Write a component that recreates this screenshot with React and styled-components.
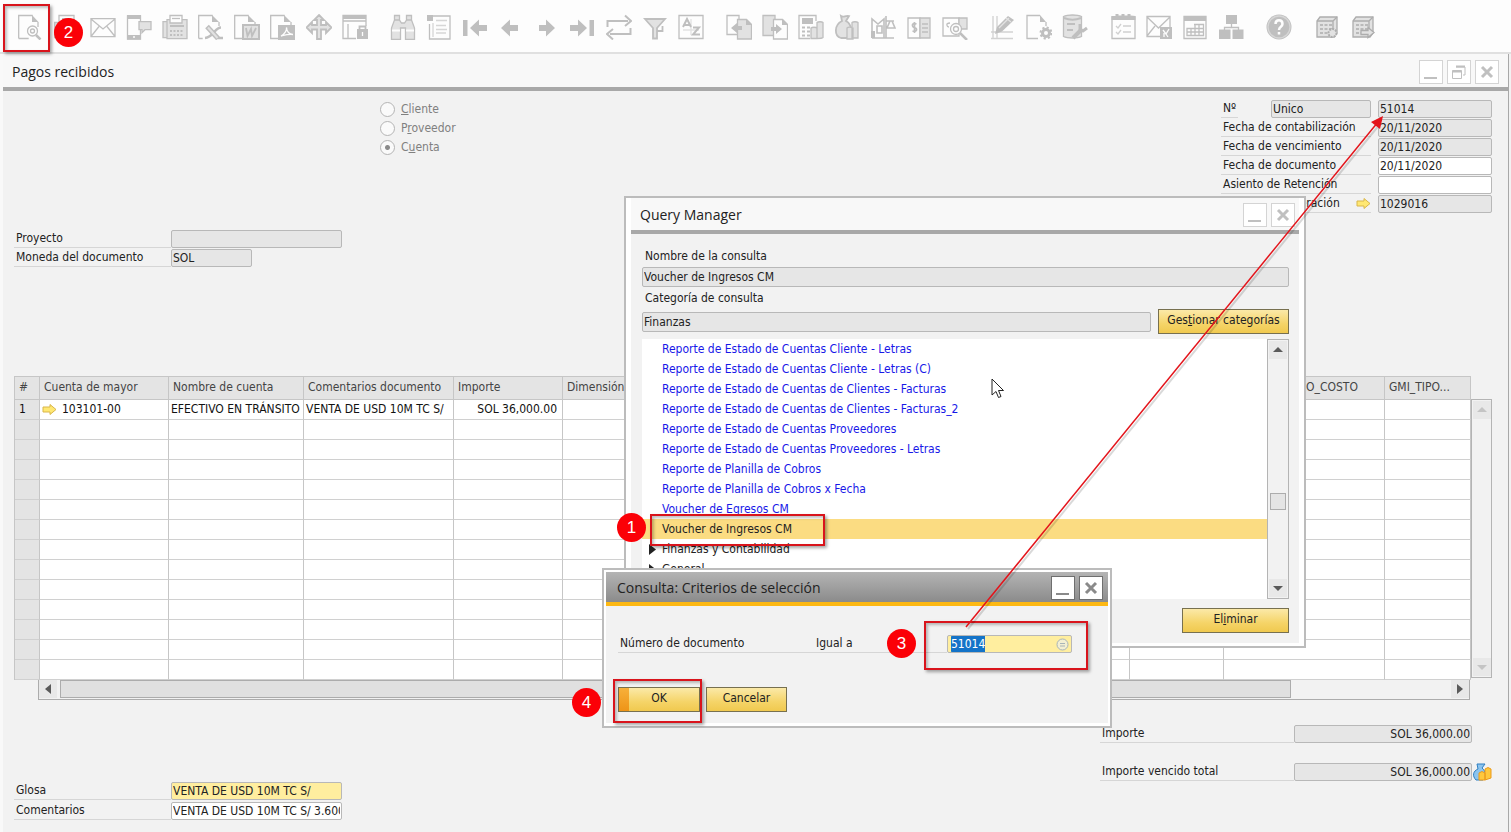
import React, { useEffect, useRef } from 'react'
import styled, { createGlobalStyle, css } from 'styled-components'

const uiFont = '"DejaVu Sans Condensed", "DejaVu Sans", Tahoma, sans-serif'
const titleFont = '"Open Sans", "Noto Sans", sans-serif'

const GlobalStyle = createGlobalStyle`
  *, *::before, *::after {
    box-sizing: border-box;
  }
  body {
    margin: 0;
    background: #f2f2f2;
    color: #222;
    font: 12px/17px ${uiFont};
  }
  button, input {
    font: inherit;
    color: inherit;
  }
`

const Desktop = styled.div`
  position: relative;
  display: flex;
  flex-direction: column;
  min-height: 100vh;
  overflow: hidden;
`

/* Toolbar */

const Toolbar = styled.nav`
  display: flex;
  gap: 22px;
  height: 54px;
  padding: 14px 18px 0;
  background: #fdfdfd;
  border-bottom: 2px solid #e0e0e0;
`

const ToolGroup = styled.div`
  display: flex;
  gap: 10px;
`

const ToolButton = styled.button`
  width: 26px;
  height: 26px;
  padding: 0;
  border: none;
  background: none;
`

const Glyph = styled.svg`
  display: block;
  width: 26px;
  height: 26px;
  fill: none;
  stroke: ${({ $dark }) => ($dark ? '#adadad' : '#bfbfbf')};
  stroke-width: 1.3;

  .f {
    fill: #bfbfbf;
    stroke: none;
  }
  .l {
    fill: #e2e2e2;
  }
  .w {
    fill: #fdfdfd;
  }
`

/* Windows */

const MainWindow = styled.main`
  flex-grow: 1;
  display: flex;
  flex-direction: column;
  margin-right: 2px;
  border-right: 1px solid #a8a8a8;
  border-left: 3px solid #f9f9f9;
  background: #f2f2f2;
`

const TitleBar = styled.header`
  display: flex;
  align-items: center;
  gap: 4px;
  height: ${({ $tall }) => ($tall ? 37 : 36)}px;
  padding: 2px ${({ $tall }) => ($tall ? 9 : 4)}px 0 9px;
  background: #f8f8f8;
  border-bottom: 4px solid #a8a8a8;

  ${({ $active }) =>
    $active &&
    css`
      height: 34px;
      padding: 1px 5px 0 11px;
      background: linear-gradient(#b4b4b4, #8b8b8b);
      border-bottom-color: #fdb813;
    `}
`

const Title = styled.h1`
  flex-grow: 1;
  margin: 0;
  font: 14px/20px ${titleFont};
  color: #222;
`

const WindowButton = styled.button`
  display: grid;
  place-items: center;
  width: 24px;
  height: 24px;
  padding: 0;
  background: #fff;
  border: 1px solid ${({ $active }) => ($active ? '#6f6f6f' : '#d4d4d4')};
  color: ${({ $active }) => ($active ? '#8a8a8a' : '#c0c0c0')};
`

const FloatingWindow = styled.section`
  position: absolute;
  left: ${({ $x }) => $x}px;
  top: ${({ $y }) => $y}px;
  width: ${({ $width }) => $width}px;
  padding: ${({ $padding }) => $padding};
  background: #fff;
  border: 2px solid #bcbcbc;
`

/* Fields */

const Label = styled.label`
  color: #222;
  white-space: nowrap;
`

const UnderlinedLabel = styled(Label)`
  height: 18px;
  padding: 0 2px;
  border-bottom: 1px solid #d6d6d6;
`

const Field = styled.input`
  min-width: 0;
  width: ${({ $width }) => ($width ? `${$width}px` : '100%')};
  height: ${({ $tall }) => ($tall ? 20 : 18)}px;
  padding: 0 1px;
  background: ${({ $tone }) => $tone || '#e6e6e6'};
  border: 1px solid #b8b8b8;
  border-radius: 2px;
  outline: none;
  text-align: ${({ $right }) => ($right ? 'right' : 'left')};

  &::selection {
    background: #1473c8;
    color: #fff;
  }
`

const GoldButton = styled.button`
  width: ${({ $width }) => $width}px;
  height: 25px;
  padding: 0 0 2px;
  background: linear-gradient(#fbe9a8, #f5d468 60%, #f0c94f);
  border: 1px solid #77704f;
  white-space: nowrap;

  ${({ $default }) =>
    $default &&
    css`
      background: linear-gradient(#f7b03a, #ee9417) left / 10px 100% no-repeat,
        linear-gradient(#fbe9a8, #f5d468 60%, #f0c94f);
    `}
`

/* Main form */

const Form = styled.div`
  flex-grow: 1;
  padding: 9px 16px 11px 11px;
`

const HeadGrid = styled.div`
  display: grid;
  grid-template-columns: 366px 1fr 271px;
  row-gap: 17px;
  margin-bottom: 109px;
`

const RadioList = styled.fieldset`
  grid-column: 2;
  margin: 0;
  padding: 0;
  border: none;
`

const RadioLabel = styled.label`
  display: flex;
  align-items: center;
  gap: 6px;
  height: 19px;
  color: #808080;
`

const Radio = styled.input`
  appearance: none;
  width: 15px;
  height: 15px;
  margin: 0;
  border: 1px solid #b4b4b4;
  border-radius: 50%;
  background: #fafafa;

  &:checked {
    background: radial-gradient(#8a8a8a 0 2px, #fafafa 3px);
  }
`

const NumberRows = styled.div`
  display: grid;
  grid-template-columns: 150px 114px;
  gap: 1px 7px;
`

const NumberRow = styled.div`
  display: flex;
  justify-content: space-between;
`

const LinkRow = styled(NumberRow)`
  padding-left: 2px;
  border-bottom: 1px solid #d6d6d6;
  align-items: center;
`

const LeftRows = styled.div`
  display: grid;
  grid-template-columns: 157px 171px;
  row-gap: ${({ $gap }) => $gap}px;
  grid-column: 1;
`

/* Matrix */

const GridArea = styled.div`
  display: grid;
  grid-template-columns: minmax(0, 1fr) 21px;
`

const Matrix = styled.table`
  width: 100%;
  table-layout: fixed;
  border-collapse: separate;
  border-spacing: 0;
  border-left: 1px solid #c6c6c6;
  border-top: 1px solid #c6c6c6;
`

const HeaderCell = styled.th`
  height: 23px;
  padding: 0 4px 2px;
  background: #e4e4e4;
  border-right: 1px solid #c6c6c6;
  border-bottom: 1px solid #c6c6c6;
  color: #444;
  font-weight: normal;
  text-align: left;
  white-space: nowrap;
  overflow: hidden;
`

const Cell = styled.td`
  height: 20px;
  padding: 0 ${({ $right }) => ($right ? 5 : 0)}px 0 ${({ $index }) => ($index ? 4 : 2)}px;
  background: ${({ $index }) => ($index ? '#e4e4e4' : '#fff')};
  border-right: 1px solid #c6c6c6;
  border-bottom: 1px solid #d0d0d0;
  color: #111;
  text-align: ${({ $right }) => ($right ? 'right' : 'left')};
  white-space: nowrap;
  overflow: hidden;
`

const LinkedValue = styled.span`
  display: flex;
  align-items: center;
  gap: 5px;
`

const VerticalScroll = styled.div`
  display: flex;
  flex-direction: column;
  justify-content: space-between;
  padding: 1px;
  background: #f2f2f2;
  border: 1px solid #b4b4b4;
`

const MatrixScroll = styled(VerticalScroll)`
  margin: 23px 0 2px;
`

const HorizontalScroll = styled.div`
  display: flex;
  justify-content: space-between;
  height: 20px;
  margin: 0 1px 0 24px;
  border: 1px solid #acacac;
  border-top: none;
`

const HorizontalThumb = styled.div`
  flex-grow: 1;
  margin: 0 160px 1px 3px;
  background: #e0e0e0;
  border: 1px solid #acacac;
`

const ScrollButton = styled.button`
  display: grid;
  place-items: center;
  width: 18px;
  height: 18px;
  padding: 0;
  border: none;
  background: #e8e8e8;
  color: ${({ disabled }) => (disabled ? '#c4c4c4' : '#5a5a5a')};
`

/* Footer */

const Footer = styled.footer`
  display: flex;
  justify-content: space-between;
  align-items: flex-end;
  margin-top: 25px;
`

const Totals = styled.div`
  display: grid;
  grid-template-columns: 194px 178px 20px;
  row-gap: 20px;
  align-self: flex-start;
  padding-bottom: 39px;
`

/* Query manager */

const QueryBody = styled.div`
  display: flex;
  flex-direction: column;
  padding: 11px 10px 10px 11px;
  background: #f2f2f2;
`

const QueryLabel = styled(Label)`
  padding-left: 3px;
  line-height: 22px;
`

const CategoryRow = styled.div`
  display: flex;
  align-items: center;
  gap: 7px;
`

const ListFrame = styled.div`
  display: grid;
  grid-template-columns: 1fr 22px;
  height: 260px;
  margin: 5px 0 9px;
  background: #fff;
`

const QueryList = styled.ul`
  margin: 0;
  padding: 0;
  list-style: none;
  overflow: hidden;
`

const QueryItem = styled.button`
  display: grid;
  grid-template-columns: 13px auto;
  justify-content: start;
  align-items: center;
  width: 100%;
  height: 20px;
  padding: 0 0 0 7px;
  border: none;
  background: ${({ $selected }) => ($selected ? '#fbdc82' : 'none')};
  color: ${({ $query }) => ($query ? '#1818e8' : '#222')};
  text-align: left;
`

const QueryThumb = styled.div`
  height: 17px;
  margin: 134px 1px auto;
  background: #e4e4e4;
  border: 1px solid #acacac;
`

const QueryActions = styled.div`
  display: flex;
  justify-content: flex-end;
`

/* Selection criteria */

const CriteriaBody = styled.div`
  padding: 29px 34px 11px 12px;
  background: #f2f2f2;
`

const CriteriaRow = styled.div`
  display: grid;
  grid-template-columns: 196px 133px 125px;
  margin-bottom: 34px;
`

const ValueBox = styled.div`
  display: flex;
  align-items: center;
  padding: 0 2px;
  background: #ffee9f;
  border: 1px solid #b8b8b8;
  border-radius: 2px;
`

const ValueField = styled(Field)`
  flex: 1;
  height: 16px;
  border: none;
`

const CriteriaActions = styled.div`
  display: flex;
  gap: 6px;
`

/* Markers drawn over the windows */

const MarkerBox = styled.div`
  position: absolute;
  left: ${({ $x }) => $x}px;
  top: ${({ $y }) => $y}px;
  width: ${({ $width }) => $width}px;
  height: ${({ $height }) => $height}px;
  border: 2px solid #d9141c;
  box-shadow: 2px 2px 3px rgba(0, 0, 0, 0.35), inset 2px 2px 3px rgba(0, 0, 0, 0.25);
  pointer-events: none;
`

const MarkerNumber = styled.span`
  position: absolute;
  left: ${({ $x }) => $x}px;
  top: ${({ $y }) => $y}px;
  width: 29px;
  height: 29px;
  border-radius: 50%;
  background: #fb0007;
  color: #fff;
  font: 17px/29px "Liberation Sans", Arial, sans-serif;
  text-align: center;
`

const Overlay = styled.svg`
  position: absolute;
  left: ${({ $x }) => $x}px;
  top: ${({ $y }) => $y}px;
  pointer-events: none;
`

const tools = [
  [
    ['Vista preliminar', <><path d="M.7 24.5V1.5h14M20 8v5M.7 24.5h10" /><path className="f" d="M14 1l6.5 7h-6.5z" /><circle cx="14.5" cy="17" r="5" /><circle cx="14.5" cy="17" r="2" /><path strokeWidth="2.5" d="M18 21l4.5 4.5" /></>],
    ['Vista previa', <><path className="w" d="M5 1.5h15v12H5z" /><path className="f" d="M8 4h9v3H8z" /><path className="l" d="M.7 8.5h22v15H.7z" /></>],
    ['Correo', <path d="M1 4.7h24v18H1zM1 5l12 10L25 5M1 22.5l8-10M25 22.5l-8-10" />],
    ['SMS', <><path d="M1.5 2h13v23h-13z" /><path className="f" d="M1 1h14v4H1zM1 21h14v4.5H1z" /><path className="l" d="M13 7.7h12v8h-6l-3 3v-3h-3z" /><circle className="w" cx="8" cy="23" r="1" stroke="none" /></>],
    ['Imprimir', <><path className="l" d="M1 7.7h4v16H1zM5 5.7h20v19H5z" /><path className="w" d="M8 1.5h12V9H8z" /><path d="M10 4.5h8" /><path strokeWidth="2" d="M8 12h14" /><path strokeWidth="2" strokeDasharray="2 1.5" d="M8 17h14M8 21h14" /></>],
    ['Excel', <><path d="M.7 24.5V1.5h14M21 8v4M.7 24.5h4" /><path className="f" d="M14 1l7 7h-7z" /><path strokeWidth="5" d="M9 12.500l11 12" /><path strokeWidth="2.500" d="M23 13.500c-6 0-8 10-16 10.500M19 24h6" /><path stroke="#e2e2e2" strokeWidth="2" d="M10 13.500l9.500 10.500" /></>],
    ['Word', <><path d="M8 24.5H.7V1.5h14M21 8v3" /><path className="f" d="M14 1l7 7h-7z" /><path className="l" strokeWidth="2" d="M9 11h16v14H9z" /><path strokeWidth="1.8" d="M12 14l1.5 8 3.5-7 1 7 4-8" /></>],
    ['PDF', <><path d="M8 24.5H.7V1.5h14M21 8v3" /><path className="f" d="M14 1l7 7h-7zM8 11h17v15H8z" /><path stroke="#fdfdfd" d="M11 22c4-2 6-6 5.5-8.5 0 4 3 7 6.5 7-5-.5-8 .5-12 1.5z" /></>],
    ['Mover', <path className="l" strokeWidth="1.8" d="M13 1l5 5h-3v5h5V8l5.500 5.500L20 19v-3.500h-5V25h-4v-9.500H6V19L.5 13.500 6 8v3h5V6H8z" />],
    ['Bloquear', <><path d="M14 24.5H1V1.5h23V12M1 7h23M6 10v14" /><path className="f" d="M1 1h23v4H1z" /><path className="f" d="M15 15h11v10H15z" /><path strokeWidth="1.8" d="M17.500 16v-3.500h6V16" /><path stroke="#fdfdfd" d="M20.5 18v4" /></>],
  ],
  [
    ['Buscar', <><path className="l" d="M4.5 1.5h5V6l2 3h3l2-3V1.5h5V6l3 8v11.5h-9V14h-5v11.5h-9V14l3-8z" /><path stroke="#fdfdfd" strokeWidth="2" d="M2 16.5h8M16 16.5h8" /><path d="M4 6h6M16 6h6" /></>],
    ['Lista', <><path d="M7 2h17v23H3.5V10" /><path className="f" d="M1 1h6v6H1z" /><path d="M7 9v14M10 6.5h11M10 11.5h10M10 15.5h11M10 19h10" stroke="#d6d6d6" /></>],
    ['Primer registro', <path className="f" d="M1 6h4.5v16H1zM8 14l9-8.5V11h8v6h-8v5.5z" />],
    ['Registro anterior', <path className="f" d="M3 14l9-8.5V11h8v6h-8v5.5z" />],
    ['Registro siguiente', <path className="f" d="M21 14l-9-8.5V11H5v6h7v5.5z" />],
    ['Último registro', <path className="f" d="M17 14L8 5.5V11H0v6h8v5.5zM19.5 6H24v16h-4.5z" />],
    ['Actualizar', <><path strokeWidth="2" d="M1.5 13V7H22M24.5 14v6H4" /><path strokeWidth="2" d="M19 1.5L25 7l-6 5M7 15l-6 5 6 5.5" /></>],
    ['Filtro', <><path className="l" strokeWidth="1.8" d="M3 5h20l-8 9v10.5h-4V14z" /><path strokeWidth="1.800" d="M15 17h5.500v-5" /></>],
    ['Ordenar', <><path d="M1 1.5h24v23H1z" /><path stroke="#e2e2e2" d="M5 16h16M13 5v16" /><path strokeWidth="2" d="M5 13l4-8 4 8M6 11h6M15 13.5h6l-6 7h7" /></>],
  ],
  [
    ['Documento base', <><path className="w" d="M1 1.5h12v19H1z" /><path className="l" d="M11.5 5.5h9l5 5v14.5h-14z" /><path className="f" d="M20 5l6 6h-6zM5 14l6-5v3h5v4h-5v3z" /></>],
    ['Documento destino', <><path className="l" d="M1 1.5h12v20H1z" /><path className="w" d="M11.5 5.5h9l5 5v14.5h-14z" /><path className="f" d="M20 5l6 6h-6zM20 15l-6-5v3H9v4h5v3z" /></>],
    ['Beneficio bruto', <><path d="M12 24.5H1V1.5h17V7" /><path className="f" d="M4 4h11v6H4z" /><path strokeWidth="2" strokeDasharray="3 2" d="M4 13.5h9M4 17.5h9M4 21.5h9" /><path className="l" d="M19 8.5c1-1 5-1 6 0v15c-1 1-5 1-6 1zM13 14c1-1 5-1 6 0v10.5h-6z" /></>],
    ['Medios de pago', <><path className="l" strokeWidth="1.800" d="M7 2c3 2 4-1 8 0l-3 5c7 4 7 16 0 17H7C0 22 0 11 8 7z" /><path className="l" d="M18 8.500c1-1 5-1 6 0V24h-6zM13 14c1-1 4-1 6 0v11h-6z" /></>],
    ['Balance', <><path strokeWidth="1.6" d="M2 24V5l6 5 6-5v19M2 24h12M7 12h5v7H7zM16 24V2M12 24h12M16 7h8M20 7l-3 7h8l-3-7" /><path className="f" d="M1 17h4v7H1z" /></>],
    ['Pagos', <><path className="w" d="M2 4h12v20H2z" /><path className="l" d="M14 4h10v20H14z" /><path strokeWidth="1.7" d="M16 10h6M16 14h6M16 18h6M10.5 10c-5-2-5 3-2 3.5s3 5-2 3.5M8.5 8v11" /></>],
    ['Vista de pagos', <><path className="w" d="M1 4h16v18H1z" /><path className="l" d="M17 4h8v11h-8z" /><path d="M8 9c-5 0-3 4-1 4" /><circle className="w" cx="14" cy="15" r="5.5" /><circle cx="14" cy="15" r="2.5" /><path strokeWidth="2.5" d="M18 19l7 7" /></>],
  ],
  [
    ['Editar diseño', <><path stroke="#d2d2d2" d="M3 2v23M1 18h22M1 24.5h22M7 2v23" /><path className="f" d="M5 20l2-7L18 2l6 4-12 11.500z" /><path stroke="#e2e2e2" d="M9 14l10-10M16 4l5 4" /></>],
    ['Parámetros', <><path d="M12 24.5H1V1.5h13M20 8v4" /><path className="f" d="M14 1l6 7h-6z" /><circle cx="20" cy="19" r="3.500" strokeWidth="3" /><circle cx="20" cy="19" r="5.500" strokeWidth="2" strokeDasharray="2.2 2.1" /></>],
    ['Herramientas', <><path className="l" d="M1.5 2.5c4-2 14-2 18 0v20c-4 2-14 2-18 0z" /><path strokeWidth="2" d="M2 4c5 2 12 2 17 0M5 10h8M5 16h6" /><path strokeWidth="4" d="M11 24l9-9" /><path strokeWidth="3" d="M18 10v5l3 2 4-3" /></>],
  ],
  [
    ['Actividades', <><path className="w" d="M2 3h23v21.5H2z" /><path className="f" d="M1.500 2h4V0h3v1.500h3V0h3v1.500h3V0h3v1.500l5 .5v4h-24z" /><path stroke="#d0d0d0" d="M6 12l2 2 3-4M6 18l2 2 3-4M13 12h8M13 18h8" /></>],
    ['Mensajes', <><path d="M1 2.5h23v20H1zM1 3l11.5 11L24 3M1 22l8-10" /><path className="f" d="M14 13h12v12H14z" /><path stroke="#fdfdfd" d="M17 16l3 4 3-5M18 23v-4M22 23l-2-3" /></>],
    ['Calendario', <><path d="M2 2.5h22v22H2z" /><path className="f" d="M2 2h22v5H2z" /><path d="M12 10.5h9.5v11H5v-7h16.5M5 18h16.5M9 14.5v7M13 10.5v11M17 10.5v11" /></>],
    ['Organigrama', <><path className="f" d="M8 1h11v9H8zM1 15.500h11.500V25H1zM14.500 15.500h11V25h-11z" /><path d="M13.500 10v4M6.500 16v-2.5h14V16" /></>],
  ],
  [
    ['Ayuda', <><circle className="f" cx="13" cy="13" r="12.5" /><circle cx="13" cy="13" r="11" stroke="#d6d6d6" /><path stroke="#fdfdfd" strokeWidth="2.5" d="M9.5 10c0-5 7-5 7 0 0 3-3.5 2.5-3.5 6M13 18v2.5" /></>],
  ],
  [
    ['Configuración', <><path className="l" d="M3 7l3-4h17v16l-3 4H3z" /><path d="M3 7h16l4-4M19 7v15" /><path strokeWidth="1.500" strokeDasharray="3 1.5" d="M6 11h12M6 15h12M6 19h9" /><circle className="l" cx="18.5" cy="19" r="4" strokeDasharray="2 1" strokeWidth="2" /></>, true],
    ['Exportar', <><path className="l" d="M3 7l3-4h17v16l-3 4H3z" /><path d="M3 7h16l4-4M19 7v15" /><path strokeWidth="1.500" strokeDasharray="3 1.5" d="M6 11h12M6 15h12M6 19h6" /><path className="l" d="M11 16.500h7V13.500l6 5-6 5V20.500h-7z" /></>, true],
  ],
]

const columns = [
  ['#', 25],
  ['Cuenta de mayor', 129],
  ['Nombre de cuenta', 135],
  ['Comentarios documento', 150],
  ['Importe', 109],
  ['Dimensión', 120],
  ['', 120],
  ['', 120],
  ['', null],
  ['', 94],
  ['GMI_TIPO_CTRO_COSTO', 161],
  ['GMI_TIPO...', 86],
]

const queries = [
  'Reporte de Estado de Cuentas Cliente - Letras',
  'Reporte de Estado de Cuentas Cliente - Letras (C)',
  'Reporte de Estado de Cuentas de Clientes - Facturas',
  'Reporte de Estado de Cuentas de Clientes - Facturas_2',
  'Reporte de Estado de Cuentas Proveedores',
  'Reporte de Estado de Cuentas Proveedores - Letras',
  'Reporte de Planilla de Cobros',
  'Reporte de Planilla de Cobros x Fecha',
  'Voucher de Egresos CM',
]

const headerFields = [
  ['contabilizacion', 'Fecha de contabilización', '20/11/2020'],
  ['vencimiento', 'Fecha de vencimiento', '20/11/2020'],
  ['documento', 'Fecha de documento', '20/11/2020', '#fff'],
  ['retencion', 'Asiento de Retención', '', '#fff'],
]

const arrows = {
  up: 'M1 8l5-5 5 5z',
  down: 'M1 4l5 5 5-5z',
  left: 'M9 1v10L3 6z',
  right: 'M3 1v10l6-5z',
}

function Arrow({ direction, disabled }) {
  return (
    <ScrollButton disabled={disabled} aria-label={direction}>
      <svg width="12" height="12">
        <path d={arrows[direction]} fill="currentColor" />
      </svg>
    </ScrollButton>
  )
}

function LinkArrow() {
  return (
    <svg width="15" height="13">
      <path
        d="M1 4h7V1.5L14 6.5 8 11.5V9H1z"
        fill="#ffe873"
        stroke="#d9b64a"
      />
    </svg>
  )
}

function WindowControls({ active, restore }) {
  return (
    <>
      <WindowButton $active={active} aria-label="Minimizar">
        <svg width="16" height="16">
          <path d="M1 14h13" stroke="currentColor" strokeWidth="2" />
        </svg>
      </WindowButton>
      {restore && (
        <WindowButton aria-label="Restaurar">
          <svg width="16" height="16" fill="none" stroke="currentColor">
            <path d="M5 3h9v8h-2M1.5 6.5h9v8h-9z" />
            <path d="M5 2.5h9M1.5 7.5h9" strokeWidth="2" />
          </svg>
        </WindowButton>
      )}
      <WindowButton $active={active} aria-label="Cerrar">
        <svg width="16" height="16">
          <path d="M3 3l10 10M13 3L3 13" stroke="currentColor" strokeWidth="3" />
        </svg>
      </WindowButton>
    </>
  )
}

function PaymentsMatrix() {
  const firstRow = [
    '1',
    <LinkedValue>
      <LinkArrow />
      103101-00
    </LinkedValue>,
    'EFECTIVO EN TRÁNSITO',
    'VENTA DE USD 10M TC S/',
    'SOL 36,000.00',
  ]

  return (
    <GridArea>
      <Matrix>
        <colgroup>
          {columns.map(([, width], i) => (
            <col key={i} width={width || undefined} />
          ))}
        </colgroup>
        <thead>
          <tr>
            {columns.map(([name], i) => (
              <HeaderCell key={i}>{name}</HeaderCell>
            ))}
          </tr>
        </thead>
        <tbody>
          {Array.from({ length: 14 }, (_, row) => (
            <tr key={row}>
              {columns.map((_, i) => (
                <Cell key={i} $index={i === 0} $right={i === 4}>
                  {row === 0 && firstRow[i]}
                </Cell>
              ))}
            </tr>
          ))}
        </tbody>
      </Matrix>
      <MatrixScroll>
        <Arrow direction="up" disabled />
        <Arrow direction="down" disabled />
      </MatrixScroll>
      <HorizontalScroll>
        <Arrow direction="left" />
        <HorizontalThumb />
        <Arrow direction="right" />
      </HorizontalScroll>
    </GridArea>
  )
}

function PaymentsWindow() {
  return (
    <MainWindow>
      <TitleBar $tall>
        <Title>Pagos recibidos</Title>
        <WindowControls restore />
      </TitleBar>
      <Form>
        <HeadGrid>
          <RadioList disabled>
            <RadioLabel>
              <Radio type="radio" name="tipo" />
              <span><u>C</u>liente</span>
            </RadioLabel>
            <RadioLabel>
              <Radio type="radio" name="tipo" />
              <span>P<u>r</u>oveedor</span>
            </RadioLabel>
            <RadioLabel>
              <Radio type="radio" name="tipo" defaultChecked />
              <span>C<u>u</u>enta</span>
            </RadioLabel>
          </RadioList>
          <NumberRows>
            <NumberRow>
              <UnderlinedLabel htmlFor="numero">Nº</UnderlinedLabel>
              <Field $width={100} aria-label="Serie" readOnly value="Unico" />
            </NumberRow>
            <Field id="numero" readOnly value="51014" />
            {headerFields.map(([id, label, value, tone]) => (
              <React.Fragment key={id}>
                <UnderlinedLabel htmlFor={id}>{label}</UnderlinedLabel>
                <Field id={id} $tone={tone} defaultValue={value} />
              </React.Fragment>
            ))}
            <LinkRow>
              <Label htmlFor="operacion">Número de operación</Label>
              <LinkArrow />
            </LinkRow>
            <Field id="operacion" readOnly value="1029016" />
          </NumberRows>
          <LeftRows $gap={1}>
            <UnderlinedLabel htmlFor="proyecto">Proyecto</UnderlinedLabel>
            <Field id="proyecto" readOnly value="" />
            <UnderlinedLabel htmlFor="moneda">Moneda del documento</UnderlinedLabel>
            <Field id="moneda" $width={81} readOnly value="SOL" />
          </LeftRows>
        </HeadGrid>
        <PaymentsMatrix />
        <Footer>
          <LeftRows $gap={2}>
            <UnderlinedLabel htmlFor="glosa">Glosa</UnderlinedLabel>
            <Field id="glosa" $tone="#ffee9f" defaultValue="VENTA DE USD 10M TC S/" />
            <UnderlinedLabel htmlFor="comentarios">Comentarios</UnderlinedLabel>
            <Field id="comentarios" $tone="#fff" defaultValue="VENTA DE USD 10M TC S/ 3.600" />
          </LeftRows>
          <Totals>
            <UnderlinedLabel htmlFor="importe">Importe</UnderlinedLabel>
            <Field id="importe" $right readOnly value="SOL 36,000.00" />
            <span />
            <UnderlinedLabel htmlFor="vencido">Importe vencido total</UnderlinedLabel>
            <Field id="vencido" $right readOnly value="SOL 36,000.00" />
            <svg width="20" height="18">
              <path d="M5 1h8l-3 4c4 3 5 9 1 12H4C0 13 1 8 6 6z" fill="#8cc4ee" stroke="#2f7fc1" />
              <path d="M7 10l3-1.5 3 1.5v7H7zM13 6l3-1.5L19 6v9l-6 2z" fill="#ffc83d" stroke="#ea9a1c" />
            </svg>
          </Totals>
        </Footer>
      </Form>
    </MainWindow>
  )
}

function QueryManager() {
  return (
    <FloatingWindow $x={624} $y={196} $width={682} $padding="0 5px 3px">
      <TitleBar>
        <Title>Query Manager</Title>
        <WindowControls />
      </TitleBar>
      <QueryBody>
        <QueryLabel htmlFor="consulta">Nombre de la consulta</QueryLabel>
        <Field id="consulta" $tall readOnly value="Voucher de Ingresos CM" />
        <QueryLabel htmlFor="categoria">Categoría de consulta</QueryLabel>
        <CategoryRow>
          <Field id="categoria" $tall readOnly value="Finanzas" />
          <div>
            <GoldButton $width={131}>Ges<u>t</u>ionar categorías</GoldButton>
          </div>
        </CategoryRow>
        <ListFrame>
          <QueryList>
            {queries.map(name => (
              <li key={name}>
                <QueryItem $query><span />{name}</QueryItem>
              </li>
            ))}
            <li>
              <QueryItem $selected><span />Voucher de Ingresos CM</QueryItem>
            </li>
            {['Finanzas y Contabilidad', 'General'].map(name => (
              <li key={name}>
                <QueryItem>
                  <svg width="8" height="11">
                    <path d="M0 0l7 5.5L0 11z" fill="#222" />
                  </svg>
                  {name}
                </QueryItem>
              </li>
            ))}
          </QueryList>
          <VerticalScroll>
            <Arrow direction="up" />
            <QueryThumb />
            <Arrow direction="down" />
          </VerticalScroll>
        </ListFrame>
        <QueryActions>
          <GoldButton $width={107}>El<u>i</u>minar</GoldButton>
        </QueryActions>
      </QueryBody>
    </FloatingWindow>
  )
}

function SelectionCriteria() {
  const valueRef = useRef(null)

  useEffect(() => {
    valueRef.current.focus()
    valueRef.current.select()
  }, [])

  return (
    <FloatingWindow $x={602} $y={568} $width={510} $padding="2px 2px 3px">
      <TitleBar $active>
        <Title>Consulta: Criterios de selección</Title>
        <WindowControls active />
      </TitleBar>
      <CriteriaBody>
        <CriteriaRow>
          <UnderlinedLabel htmlFor="criterio">Número de documento</UnderlinedLabel>
          <UnderlinedLabel as="span">Igual a</UnderlinedLabel>
          <ValueBox>
            <ValueField id="criterio" ref={valueRef} $tone="transparent" defaultValue="51014" />
            <svg width="13" height="13" fill="none" stroke="#a8b4b8">
              <circle cx="6.5" cy="6.5" r="5.5" fill="#f3efd2" />
              <path d="M4 5.5h5M4 8h5" />
            </svg>
          </ValueBox>
        </CriteriaRow>
        <CriteriaActions>
          <GoldButton $width={82} $default>OK</GoldButton>
          <GoldButton $width={81}>Cancelar</GoldButton>
        </CriteriaActions>
      </CriteriaBody>
    </FloatingWindow>
  )
}

function Markers() {
  return (
    <>
      <MarkerBox $x={3} $y={4} $width={47} $height={48} />
      <MarkerBox $x={650} $y={514} $width={175} $height={32} />
      <MarkerBox $x={924} $y={621} $width={164} $height={49} />
      <MarkerBox $x={613} $y={679} $width={89} $height={44} />
      <MarkerNumber $x={617} $y={513}>1</MarkerNumber>
      <MarkerNumber $x={54} $y={18}>2</MarkerNumber>
      <MarkerNumber $x={887} $y={629}>3</MarkerNumber>
      <MarkerNumber $x={572} $y={688}>4</MarkerNumber>
      <Overlay $x={960} $y={110} width="430" height="525">
        <path d="M8 519L420 14" stroke="rgba(0,0,0,.15)" strokeWidth="2" />
        <path d="M6 517L418 12" stroke="#e3141b" strokeWidth="1.5" />
        <path d="M423 6l-3 13-9-7z" fill="#e3141b" />
      </Overlay>
      <Overlay $x={991} $y={378} width="14" height="21">
        <path
          d="M1 1v16l4-3.5 2.5 6 2.5-1-2.5-6h5z"
          fill="#fff"
          stroke="#222"
        />
      </Overlay>
    </>
  )
}

export default function App() {
  return (
    <Desktop>
      <GlobalStyle />
      <Toolbar>
        {tools.map((group, i) => (
          <ToolGroup key={i}>
            {group.map(([name, drawing, dark]) => (
              <ToolButton key={name} aria-label={name}>
                <Glyph viewBox="0 0 26 26" $dark={dark}>{drawing}</Glyph>
              </ToolButton>
            ))}
          </ToolGroup>
        ))}
      </Toolbar>
      <PaymentsWindow />
      <QueryManager />
      <SelectionCriteria />
      <Markers />
    </Desktop>
  )
}
